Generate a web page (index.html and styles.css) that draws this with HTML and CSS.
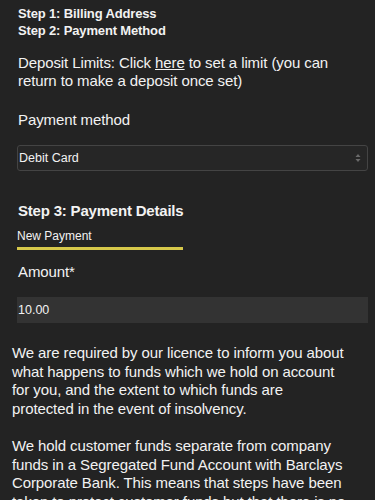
FILE: index.html
```html
<!DOCTYPE html>
<html>
<head>
<meta charset="utf-8">
<link rel="stylesheet" href="styles.css">
</head>
<body>
<div class="page">
  <div class="steps">
    <div class="step">Step 1: Billing Address</div>
    <div class="step">Step 2: Payment Method</div>
  </div>
  <p class="limits">Deposit Limits: Click <a href="#" class="link">here</a> to set a limit (you can return to make a deposit once set)</p>
  <div class="label">Payment method</div>
  <div class="select">
    <span>Debit Card</span>
    <svg class="arrows" width="6" height="10" viewBox="0 0 6 10"><path d="M0.5 4 L3 1 L5.5 4 Z M0.5 6 L3 9 L5.5 6 Z" fill="#6a6a6a"/></svg>
  </div>
  <h2 class="heading">Step 3: Payment Details</h2>
  <div class="tabs"><div class="tab">New Payment</div></div>
  <div class="label amount-label">Amount*</div>
  <div class="input">10.00</div>
  <div class="info">
    <p>We are required by our licence to inform you about what happens to funds which we hold on account for you, and the extent to which funds are<br>protected in the event of insolvency.</p>
    <p>We hold customer funds separate from company funds in a Segregated Fund Account with Barclays Corporate Bank. This means that steps have been taken to protect customer funds but that there is no absolute guarantee that all funds will be repaid.</p>
  </div>
</div>
</body>
</html>
```
FILE: styles.css
```css
html, body { margin: 0; padding: 0; background: #232323; }
body { font-family: "Liberation Sans", Arial, sans-serif; color: #f2f2f2; overflow: hidden; }
.page { padding: 5px 0 0 0; }
.steps { padding-left: 18px; font-size: 13px; font-weight: 700; line-height: 17px; letter-spacing: -0.15px; }
.limits { margin: 15px 0 0 18px; font-size: 15px; line-height: 18px; padding-right: 10px; letter-spacing: -0.1px; }
.link { color: #f2f2f2; text-decoration: underline; }
.label { margin: 21px 0 0 18px; font-size: 15px; line-height: 18px; letter-spacing: -0.1px; }
.select { margin: 16px 7px 0 17px; height: 24px; border: 1px solid #444; border-radius: 3px; background: #262626; display: flex; align-items: center; justify-content: space-between; padding: 0 6px 0 1px; font-size: 12.5px; }
.heading { margin: 31px 0 0 18px; font-size: 15px; font-weight: 700; line-height: 18px; letter-spacing: -0.2px; }
.tabs { margin: 6px 0 0 17px; }
.tab { display: inline-block; width: 166px; font-size: 12px; line-height: 15px; padding: 0 0 3px 0; border-bottom: 3px solid #d6c84a; box-sizing: border-box; }
.amount-label { margin-top: 13px; }
.input { margin: 16px 7px 0 17px; height: 26px; background: #333333; font-size: 12.5px; display: flex; align-items: center; padding-left: 1px; }
.info { margin: 21px 0 0 12px; width: 338px; font-size: 15px; line-height: 18.5px; letter-spacing: -0.1px; }
.info p { margin: 0 0 19px 0; }
```
